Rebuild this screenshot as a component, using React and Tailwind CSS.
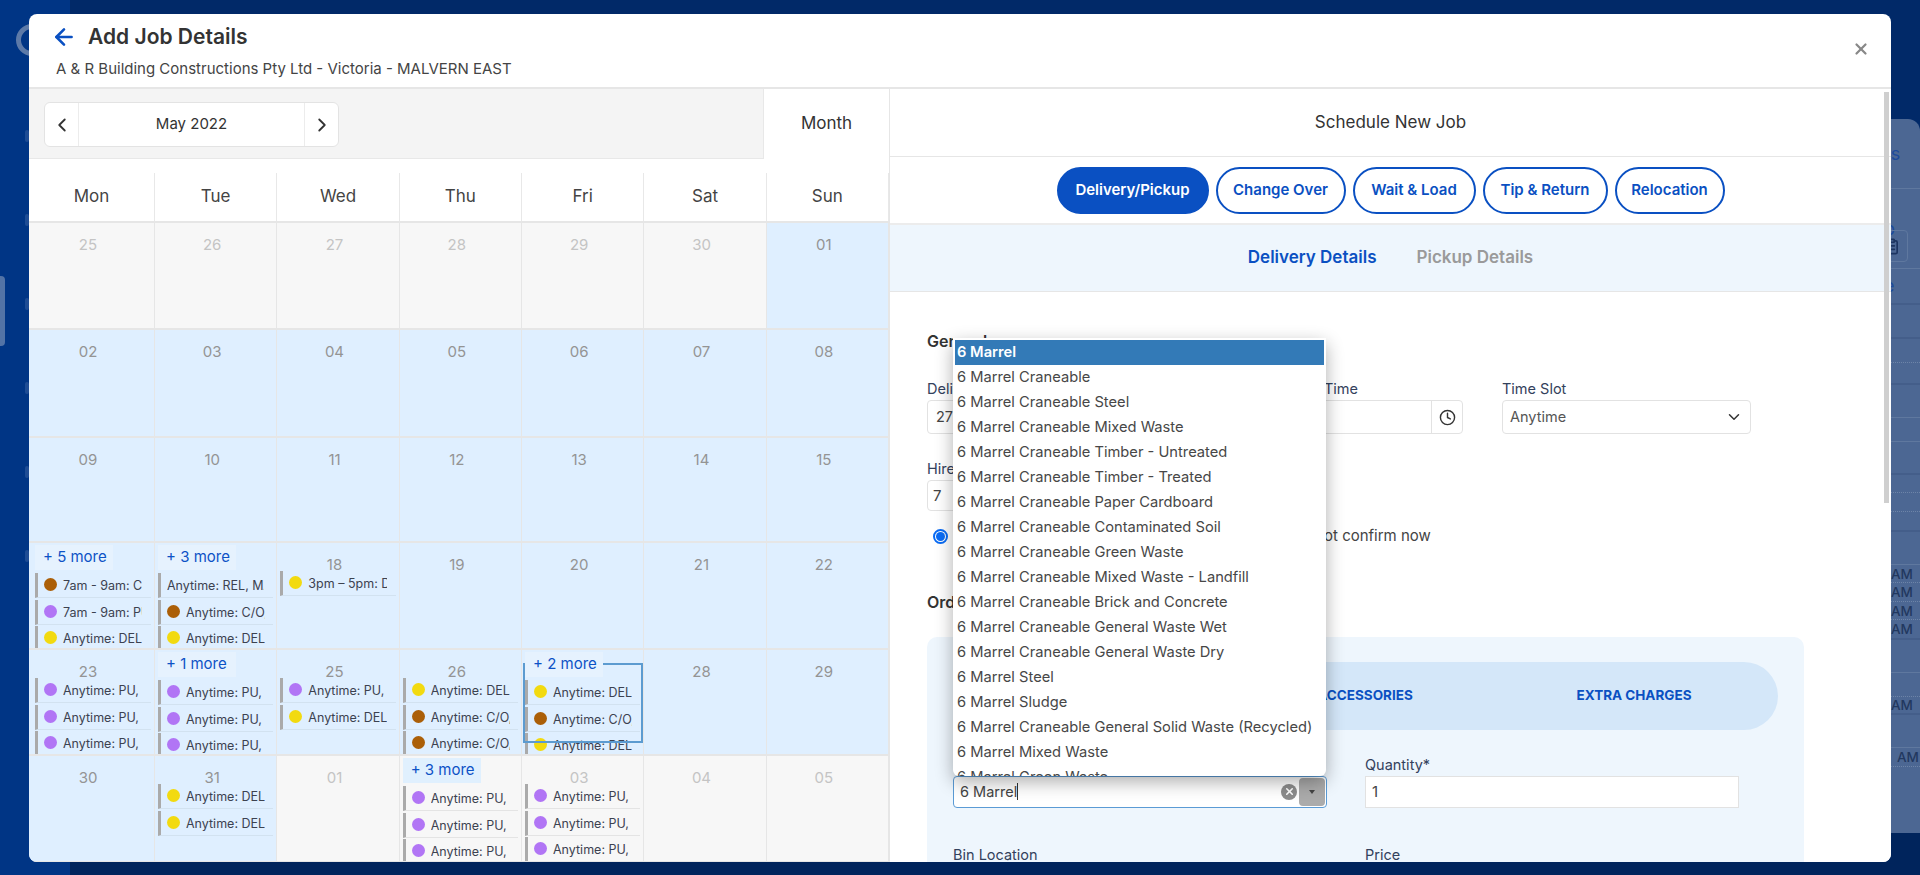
import { ArrowLeft, ChevronLeft, ChevronRight, ChevronDown, Clock, X, ClipboardList } from 'lucide-react'

const FONT = "font-['Inter','Open_Sans',sans-serif]"

const Y = 'bg-[#f2da10]'
const B = 'bg-[#ab5f08]'
const P = 'bg-[#b175f5]'

const pu = { dot: P, text: 'Anytime: PU, MALVERN' }
const del = { dot: Y, text: 'Anytime: DEL, MALVERN' }
const co = { dot: B, text: 'Anytime: C/O, MALVERN' }

const ROWS = [
  {
    h: 'h-[107px]',
    cells: [
      { d: '25', off: true }, { d: '26', off: true }, { d: '27', off: true },
      { d: '28', off: true }, { d: '29', off: true }, { d: '30', off: true }, { d: '01' },
    ],
  },
  {
    h: 'h-[108px]',
    cells: ['02', '03', '04', '05', '06', '07', '08'].map(d => ({ d })),
  },
  {
    h: 'h-[105px]',
    cells: ['09', '10', '11', '12', '13', '14', '15'].map(d => ({ d })),
  },
  {
    h: 'h-[107px]',
    cells: [
      { more: '+ 5 more', events: [{ dot: B, text: '7am - 9am: C/O, MALVERN' }, { dot: P, text: '7am - 9am: PU, MALVERN' }, del] },
      { more: '+ 3 more', events: [{ text: 'Anytime: REL, MALVERN' }, co, del] },
      { d: '18', events: [{ dot: Y, text: '3pm – 5pm: DEL, MALVERN' }] },
      { d: '19' }, { d: '20' }, { d: '21' }, { d: '22' },
    ],
  },
  {
    h: 'h-[106px]',
    cells: [
      { d: '23', events: [pu, pu, pu] },
      { more: '+ 1 more', events: [pu, pu, pu] },
      { d: '25', events: [pu, del] },
      { d: '26', events: [del, co, co] },
      { more: '+ 2 more', selected: true, events: [del, co, del] },
      { d: '28' }, { d: '29' },
    ],
  },
  {
    h: 'h-[107px]',
    cells: [
      { d: '30' },
      { d: '31', events: [del, del] },
      { d: '01', off: true },
      { more: '+ 3 more', off: true, events: [pu, pu, pu] },
      { d: '03', off: true, events: [pu, pu, pu] },
      { d: '04', off: true }, { d: '05', off: true },
    ],
  },
]

const DAYS = ['Mon', 'Tue', 'Wed', 'Thu', 'Fri', 'Sat', 'Sun']

const OPTIONS = [
  '6 Marrel',
  '6 Marrel Craneable',
  '6 Marrel Craneable Steel',
  '6 Marrel Craneable Mixed Waste',
  '6 Marrel Craneable Timber - Untreated',
  '6 Marrel Craneable Timber - Treated',
  '6 Marrel Craneable Paper Cardboard',
  '6 Marrel Craneable Contaminated Soil',
  '6 Marrel Craneable Green Waste',
  '6 Marrel Craneable Mixed Waste - Landfill',
  '6 Marrel Craneable Brick and Concrete',
  '6 Marrel Craneable General Waste Wet',
  '6 Marrel Craneable General Waste Dry',
  '6 Marrel Steel',
  '6 Marrel Sludge',
  '6 Marrel Craneable General Solid Waste (Recycled)',
  '6 Marrel Mixed Waste',
  '6 Marrel Green Waste',
]

const JOB_TYPES = [
  { label: 'Delivery/Pickup', w: 'w-[152px]', active: true },
  { label: 'Change Over', w: 'w-[130px]' },
  { label: 'Wait & Load', w: 'w-[123px]' },
  { label: 'Tip & Return', w: 'w-[125px]' },
  { label: 'Relocation', w: 'w-[110px]' },
]

// what peeks out of the page behind the modal on the right
const BACK_ROWS = [
  { h: 'h-[70px]', line: 'border-b border-[#5f789f]', text: 'rs', blue: true },
  { h: 'h-[80px]', line: 'border-b border-[#5f789f]', text: 'p', blue: true, icon: true },
  { h: 'h-[36px]', line: 'border-b-2 border-[#445e8a]', text: 'e', blue: true },
  { h: 'h-[34px]', line: 'border-b-2 border-[#445e8a]' },
  { h: 'h-[24px]', line: 'border-b border-dotted border-[#6d84a8]' },
  { h: 'h-[22px]', line: 'border-b-2 border-[#445e8a]' },
  { h: 'h-[33px]', line: 'border-b border-[#5f789f]' },
  { h: 'h-[24px]', line: 'border-b border-[#5f789f]' },
  { h: 'h-[33px]', line: 'border-b-2 border-[#445e8a]' },
  { h: 'h-[18px]', line: 'border-b border-dotted border-[#6d84a8]' },
  { h: 'h-[19px]', line: 'border-b border-dotted border-[#6d84a8]' },
  { h: 'h-[20px]', line: 'border-b-2 border-[#445e8a]' },
  { h: 'h-[33px]', line: 'border-b border-[#5f789f]' },
  { h: 'h-[18px]', line: 'border-b border-dotted border-[#6d84a8]', text: 'AM' },
  { h: 'h-[19px]', line: 'border-b border-dotted border-[#6d84a8]', text: 'AM' },
  { h: 'h-[18px]', line: 'border-b border-dotted border-[#6d84a8]', text: 'AM' },
  { h: 'h-[20px]', line: 'border-b-2 border-[#445e8a]', text: 'AM' },
  { h: 'h-[33px]', line: 'border-b border-[#5f789f]' },
  { h: 'h-[24px]', line: 'border-b border-dotted border-[#6d84a8]' },
  { h: 'h-[18px]', line: 'border-b-2 border-[#445e8a]', text: 'AM' },
  { h: 'h-[33px]', line: 'border-b border-[#5f789f]' },
  { h: 'h-[19px]', line: 'border-b border-dotted border-[#6d84a8]', text: 'AM', far: true },
]

function BackPanel() {
  return (
    <div className="absolute left-[1880px] top-[119px] w-[40px] h-[714px] bg-[#4c6793] rounded-tr-xl overflow-hidden">
      {BACK_ROWS.map((r, i) => (
        <div key={i} className={`relative flex items-center justify-end ${r.h} ${r.line}`}>
          {r.text && (
            <span className={`absolute leading-[16px] ${r.blue ? 'left-[4px] text-[18px] text-[#1d4b9c]' : 'text-[13.5px] font-medium text-[#22385f]'} ${!r.blue && (r.far ? 'left-[17px]' : 'left-[11px]')}`}>
              {r.text}
            </span>
          )}
          {r.icon && (
            <span className="absolute right-[12px] top-[41px] w-[30px] h-[32px] rounded border border-[#5f789f] flex items-center justify-end pr-[7px] text-[#1d3561]">
              <ClipboardList size={17} strokeWidth={2.4} />
            </span>
          )}
        </div>
      ))}
    </div>
  )
}

function Sidebar() {
  return (
    <div className="relative w-[70px] bg-[#003585] shrink-0">
      <div className="absolute left-[16px] top-[24px] w-[32px] h-[32px] rounded-full border-[5px] border-[#5d7aa8]" />
      <div className="absolute left-0 top-[276px] w-[5px] h-[70px] rounded-r bg-[#5273a6]" />
      <div className="flex flex-col items-end pr-[41px] pt-[130px] gap-[72px]">
        {[0, 1, 2, 3, 4, 5].map(i => <span key={i} className="w-[4px] h-[12px] rounded-sm bg-[#1e4c94]" />)}
      </div>
    </div>
  )
}

function CalendarEvent({ event, off }) {
  return (
    <div className={`flex h-[25px] mb-[1.5px] mr-[3px] items-start border-l-[3px] border-l-[#aaaaaa] border-b overflow-hidden ${off ? 'border-b-[#e4e4e4]' : 'border-b-[#d2e2f0]'}`}>
      {event.dot && <span className={`mt-[5px] ml-[6px] w-[13px] h-[13px] rounded-full shrink-0 ${event.dot}`} />}
      <span className={`mt-[4px] h-[17px] overflow-hidden whitespace-nowrap text-[12.5px] leading-[17px] text-[#3c4250] ml-[6px] ${event.dot ? 'w-[79px]' : 'w-[97px]'}`}>
        {event.text}
      </span>
    </div>
  )
}

function CalendarCell({ cell, first }) {
  return (
    <div className={`relative border-r border-[#e6e6e6] overflow-hidden ${first ? 'pl-[6px]' : 'pl-[3px]'} ${cell.off ? 'bg-[#f7f7f7]' : 'bg-[#dfefff]'}`}>
      {cell.selected && (
        <div className="absolute left-[1px] top-[13px] w-[120px] h-[80px] border-2 border-[#5c9bd0] z-10 pointer-events-none" />
      )}
      <div className="h-[28px]">
        {cell.more ? (
          <div className={`relative z-20 mt-[2px] w-[78px] h-[25px] pl-[8px] text-[15px] leading-[24px] whitespace-nowrap text-[#0d52c6] ${cell.off ? 'bg-[#e0f0fe]' : 'bg-[#e6f2fe]'}`}>
            {cell.more}
          </div>
        ) : (
          <div className={`pt-[13px] text-center text-[15px] leading-[18px] ${first ? 'pr-[13px]' : 'pr-[10px]'} ${cell.off ? 'text-[#c4c4c4]' : 'text-[#949494]'}`}>
            {cell.d}
          </div>
        )}
      </div>
      {(cell.events || []).map((ev, i) => <CalendarEvent key={i} event={ev} off={cell.off} />)}
    </div>
  )
}

function Calendar() {
  return (
    <div className="w-[861px] shrink-0 border-r border-[#e6e6e6] flex flex-col">
      <div className="flex h-[70px] shrink-0">
        <div className="flex-1 pl-[15px] pt-[13px] bg-[#f4f4f4] border-b border-[#e8e8e8]">
          <div className="flex w-[295px] h-[45px] bg-white border border-[#e3e3e3] rounded-md text-[#333]">
            <div className="w-[34px] flex items-center justify-center border-r border-[#ececec]">
              <ChevronLeft size={22} strokeWidth={2} />
            </div>
            <div className="flex-1 flex items-center justify-center text-[15px]">May 2022</div>
            <div className="w-[34px] flex items-center justify-center border-l border-[#ececec]">
              <ChevronRight size={22} strokeWidth={2} />
            </div>
          </div>
        </div>
        <div className="w-[126px] bg-white border-l border-[#e8e8e8] flex items-center justify-center text-[17px] text-[#333]">
          Month
        </div>
      </div>
      <div className="grid grid-cols-[126px_repeat(6,1fr)] h-[64px] shrink-0 pt-[14px] bg-white border-b-2 border-[#e6e6e6]">
        {DAYS.map(d => (
          <div key={d} className="flex items-center justify-center border-r border-[#e8e8e8] text-[17px] text-[#444]">{d}</div>
        ))}
      </div>
      {ROWS.map((row, i) => (
        <div key={i} className={`grid grid-cols-[126px_repeat(6,1fr)] shrink-0 border-b-2 border-[#e6e6e6] ${row.h}`}>
          {row.cells.map((cell, j) => <CalendarCell key={j} cell={cell} first={j === 0} />)}
        </div>
      ))}
    </div>
  )
}

function Field({ label, className, children }) {
  return (
    <div className={className}>
      <div className="text-[14.5px] leading-[20px] text-[#33415c] mb-[1px] whitespace-nowrap">{label}</div>
      {children}
    </div>
  )
}

function BinDropdown() {
  return (
    <div className="absolute left-[63px] top-[249px] w-[373px] h-[438px] bg-white rounded-b-md shadow-[0_6px_18px_rgba(0,0,0,0.32)] overflow-hidden z-30 pt-[2px] px-[2px]">
      {OPTIONS.map((o, i) => (
        <div
          key={o}
          className={`h-[25px] pl-[2px] text-[14.7px] leading-[24px] whitespace-nowrap ${i === 0 ? 'bg-[#337ab7] text-white font-semibold' : 'text-[#474747]'}`}
        >
          {o}
        </div>
      ))}
    </div>
  )
}

function JobForm() {
  return (
    <div className="relative flex-1 min-w-0 bg-white overflow-hidden">
      <div className="h-[68px] border-b border-[#e6e6e6] flex items-center justify-center text-[17px] text-[#333]">
        Schedule New Job
      </div>
      <div className="h-[68px] border-b-2 border-[#ececec] flex items-center justify-center gap-[7px]">
        {JOB_TYPES.map(t => (
          <button
            key={t.label}
            type="button"
            className={`h-[47px] rounded-full border-2 border-[#0a50c2] text-[15px] font-semibold whitespace-nowrap ${t.w} ${t.active ? 'bg-[#0a50c2] text-white' : 'bg-white text-[#0a50c2]'}`}
          >
            {t.label}
          </button>
        ))}
      </div>
      <div className="h-[67px] bg-[#eef6fd] border-b border-[#e6e6e6] flex items-center justify-center gap-[40px] text-[17px] font-semibold">
        <span className="text-[#0a50c2]">Delivery Details</span>
        <span className="text-[#9a9a9a]">Pickup Details</span>
      </div>
      <div className="pl-[37px] pr-[87px] pt-[37px]">
        <div className="text-[16px] font-semibold leading-[24px] text-[#333]">General</div>
        <div className="flex mt-[26px]">
          <Field label="Delivery Date" className="w-[300px]">
            <div className="h-[34px] border border-[#e2e2e2] rounded pl-[8px] text-[14.5px] leading-[32px] text-[#444]">27/05/2022</div>
          </Field>
          <Field label="Delivery Start Time" className="w-[236px]">
            <div className="flex h-[34px] border border-[#e2e2e2] rounded">
              <div className="flex-1 border-r border-[#e2e2e2]" />
              <div className="w-[30px] flex items-center justify-center text-[#333]"><Clock size={17} strokeWidth={2} /></div>
            </div>
          </Field>
          <Field label="Time Slot" className="w-[249px] ml-[39px]">
            <div className="flex h-[34px] items-center justify-between border border-[#e2e2e2] rounded px-[7px] text-[14.5px] text-[#555]">
              Anytime
              <ChevronDown size={18} strokeWidth={2} className="text-[#333]" />
            </div>
          </Field>
        </div>
        <Field label="Hire Days" className="mt-[25px] w-[270px]">
          <div className="h-[31px] border border-[#e2e2e2] rounded pl-[5px] text-[15px] leading-[29px] text-[#444]">7</div>
        </Field>
        <div className="flex items-center mt-[14px] pl-[6px] text-[15px] text-[#444]">
          <span className="w-[15px] h-[15px] rounded-full border-2 border-[#0a6cf5] flex items-center justify-center">
            <span className="w-[9px] h-[9px] rounded-full bg-[#0a6cf5]" />
          </span>
          <span className="ml-[8px]">Confirm now</span>
          <span className="ml-[244px]">Do not confirm now</span>
        </div>
        <div className="mt-[42px] text-[16px] font-semibold leading-[24px] text-[#333]">Order Details</div>
        <div className="mt-[23px] h-[300px] bg-[#eef6fd] rounded-[10px] px-[26px] pt-[25px]">
          <div className="flex h-[68px] items-center bg-[#d4e7f9] rounded-full text-[13.5px] font-bold text-[#0a50c2]">
            <span className="w-[337px] text-center">BIN TYPE</span>
            <span className="w-[150px] text-center">ACCESSORIES</span>
            <span className="ml-[129px] w-[130px] text-center whitespace-nowrap">EXTRA CHARGES</span>
          </div>
          <div className="flex mt-[25px] gap-[38px]">
            <Field label="Bin Type*" className="w-[374px]">
              <div className="relative h-[32px] bg-white border border-[#5b9bd5] rounded flex items-center pl-[6px] text-[14.5px] text-[#444]">
                6 Marrel<span className="w-px h-[17px] bg-[#333]" />
                <span className="absolute right-[29px] top-[7px] w-[16px] h-[16px] rounded-full bg-[#8d8d8d] flex items-center justify-center text-white">
                  <X size={11} strokeWidth={3.5} />
                </span>
                <span className="absolute right-[1px] top-[1px] w-[26px] h-[28px] bg-[#ababab] rounded-sm flex items-center justify-center">
                  <span className="w-0 h-0 border-x-[3px] border-x-transparent border-t-[4px] border-t-[#444]" />
                </span>
              </div>
            </Field>
            <Field label="Quantity*" className="w-[374px]">
              <div className="h-[32px] bg-white border border-[#e2e2e2] pl-[6px] text-[15px] leading-[30px] text-[#444]">1</div>
            </Field>
          </div>
          <div className="flex mt-[37px] gap-[38px] text-[14.5px] leading-[20px] text-[#33415c]">
            <span className="w-[374px]">Bin Location</span>
            <span className="w-[374px]">Price</span>
          </div>
        </div>
      </div>
      <BinDropdown />
      <div className="absolute right-[2px] top-[3px] w-[5px] h-[411px] bg-[#cfcfcf]" />
    </div>
  )
}

export default function App() {
  return (
    <div className={`relative h-[875px] overflow-hidden bg-[#012968] ${FONT}`}>
      <div className="flex h-full">
        <Sidebar />
        <div className="flex-1 flex flex-col">
          <div className="flex-1" />
          <div className="h-[42px] bg-[#00245c]" />
        </div>
      </div>
      <BackPanel />
      <div className="absolute left-[29px] top-[14px] w-[1862px] h-[848px] bg-white rounded-lg overflow-hidden flex flex-col">
        <div className="relative h-[75px] shrink-0 border-b-2 border-[#e6e6e6] pl-[27px] pt-[11px]">
          <div className="flex items-center gap-[11px] h-[24px]">
            <ArrowLeft size={26} strokeWidth={2.4} className="text-[#0a50c2] -ml-[5px]" />
            <span className="text-[21px] font-semibold leading-[24px] text-[#333]">Add Job Details</span>
          </div>
          <div className="mt-[10px] text-[15px] leading-[20px] text-[#444]">A &amp; R Building Constructions Pty Ltd - Victoria - MALVERN EAST</div>
          <X size={18} strokeWidth={3} className="absolute right-[21px] top-[26px] text-[#888]" />
        </div>
        <div className="flex flex-1 min-h-0">
          <Calendar />
          <JobForm />
        </div>
      </div>
    </div>
  )
}
